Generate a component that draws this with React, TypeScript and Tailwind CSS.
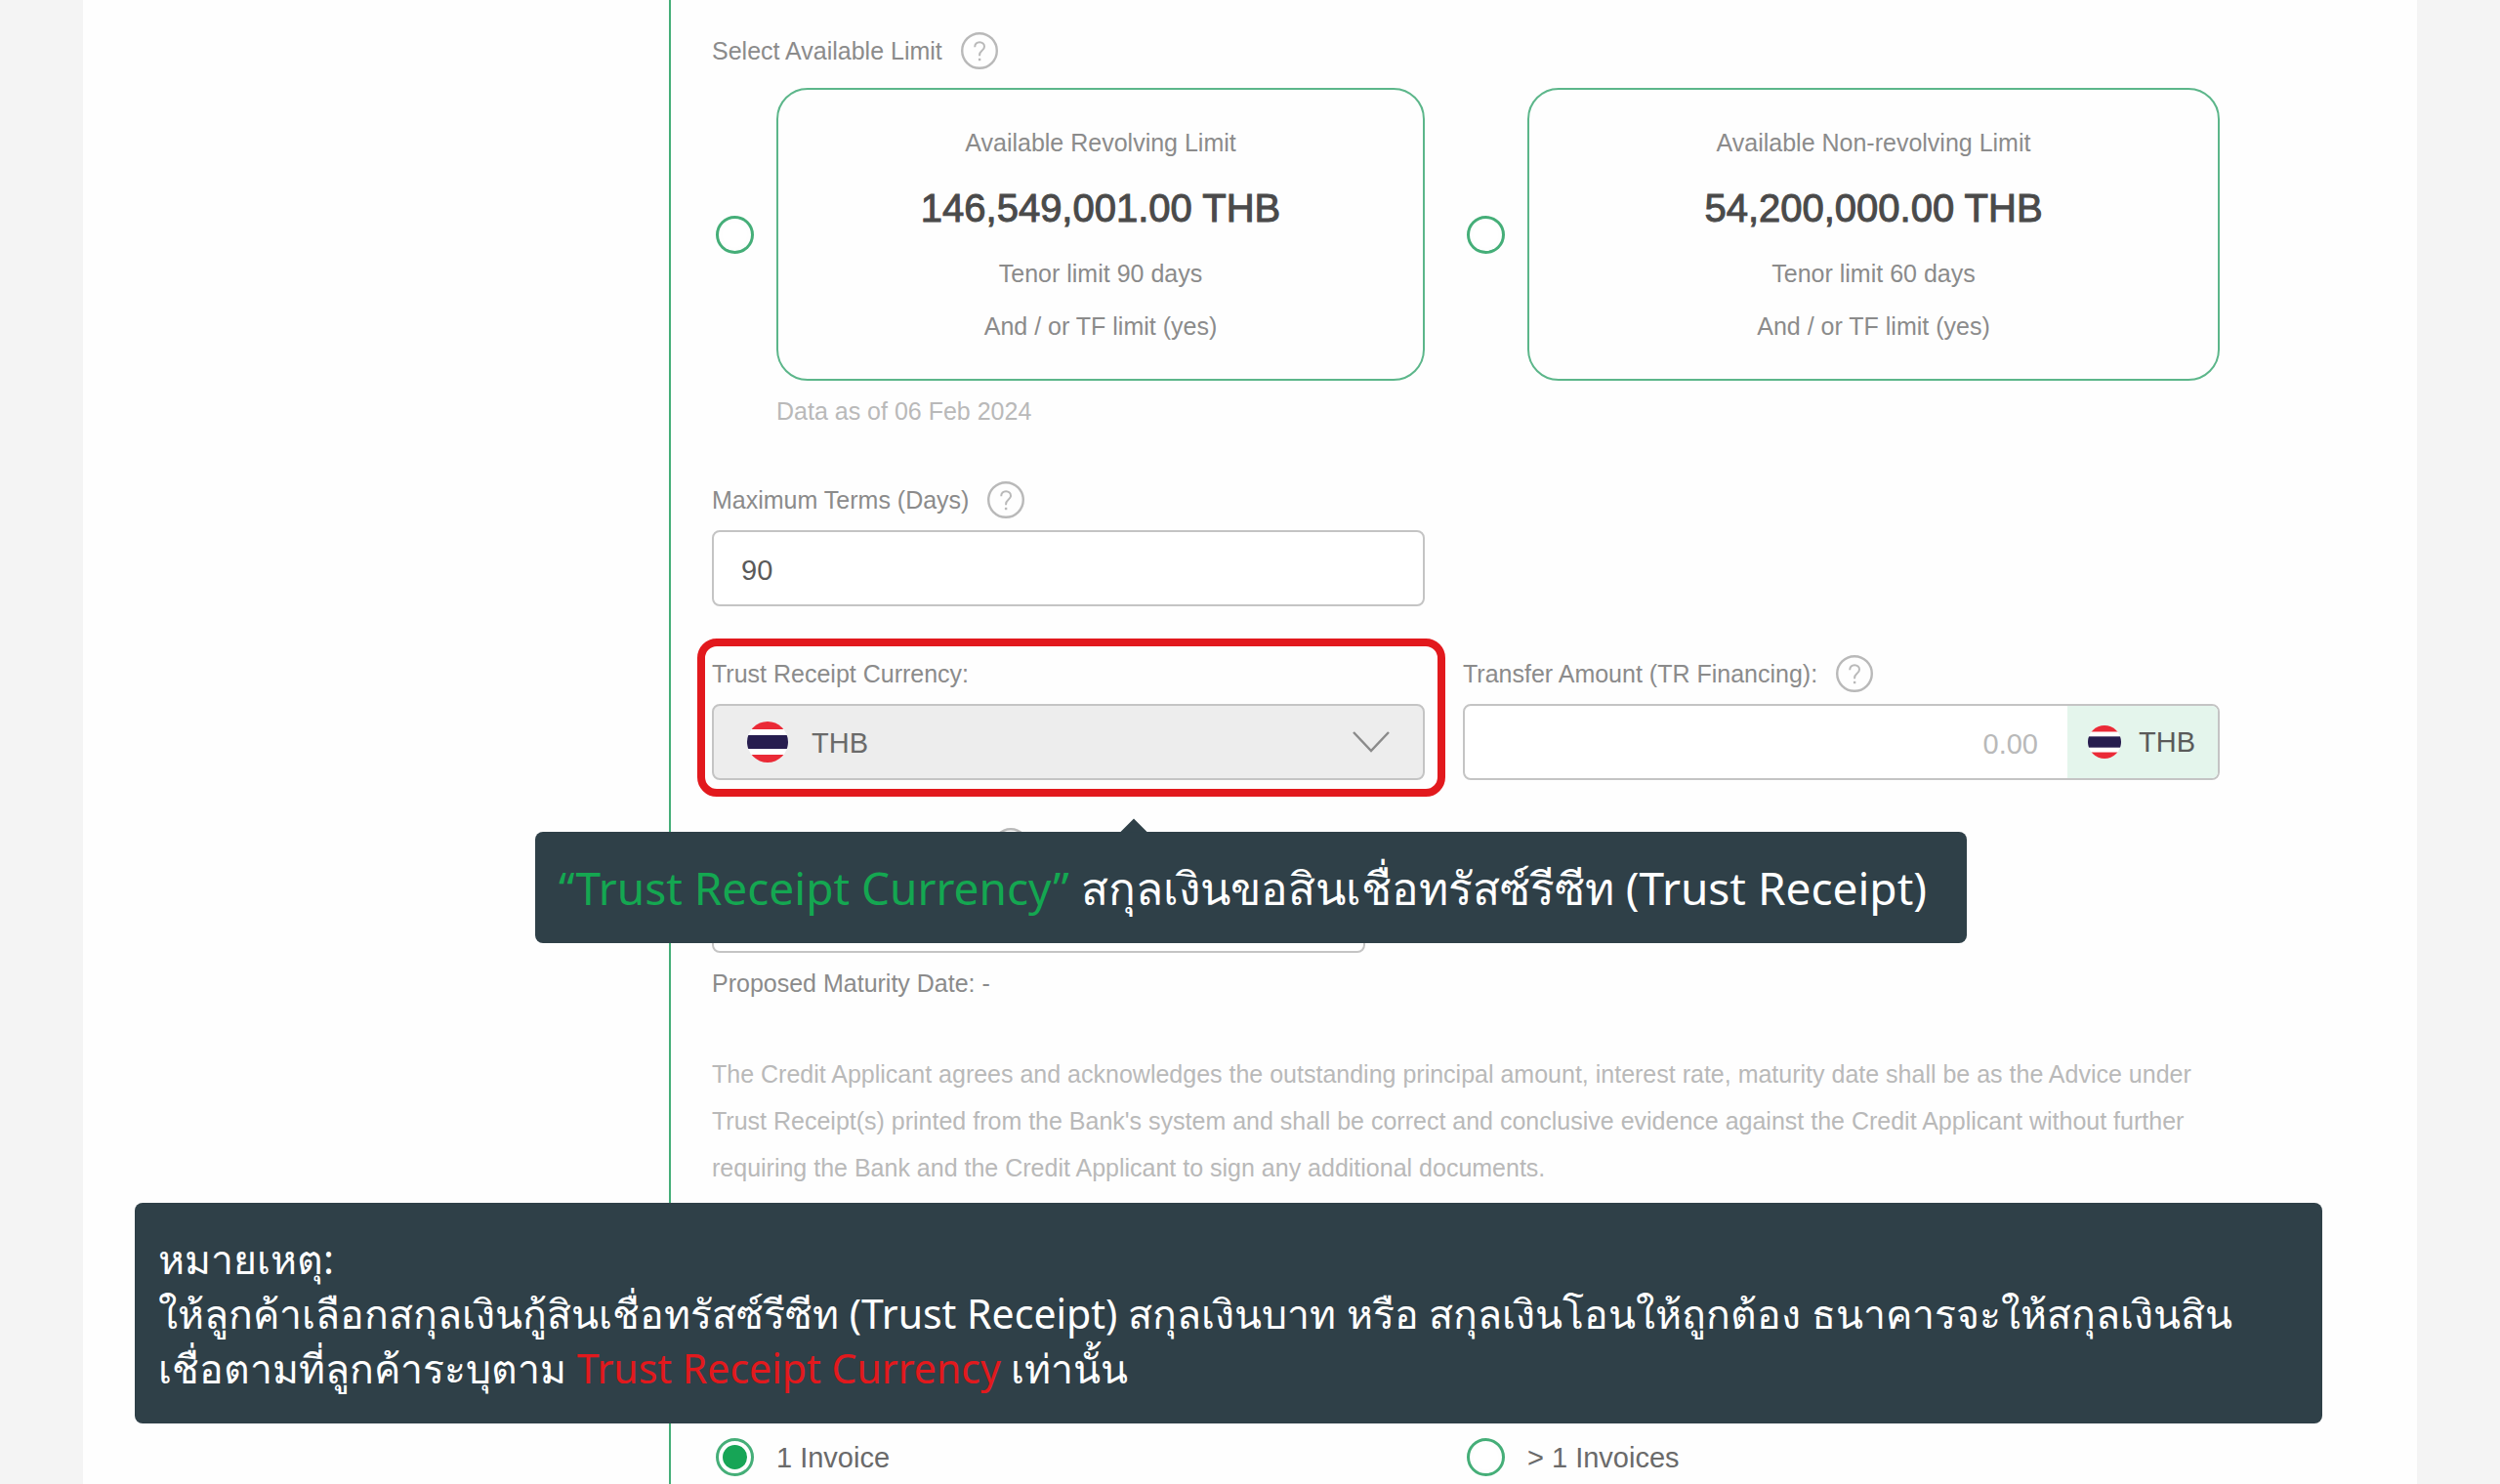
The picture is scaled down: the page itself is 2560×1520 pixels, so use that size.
import { ReactNode } from 'react';

interface LimitOption {
  id: string;
  title: string;
  amount: string;
  tenor: string;
  note: string;
}

const limits: LimitOption[] = [
  {
    id: 'revolving',
    title: 'Available Revolving Limit',
    amount: '146,549,001.00 THB',
    tenor: 'Tenor limit 90 days',
    note: 'And / or TF limit (yes)',
  },
  {
    id: 'non-revolving',
    title: 'Available Non-revolving Limit',
    amount: '54,200,000.00 THB',
    tenor: 'Tenor limit 60 days',
    note: 'And / or TF limit (yes)',
  },
];

const invoices = [
  { id: 'single', label: '1 Invoice' },
  { id: 'multiple', label: '> 1 Invoices' },
];

const radioClass =
  'appearance-none shrink-0 size-[39px] rounded-full border-[3px] border-[#45ae78] bg-white p-[4px] bg-clip-content checked:bg-[#17a556]';

function HelpButton() {
  return (
    <button type="button" aria-label="?" className="block size-[38px] shrink-0">
      <svg viewBox="0 0 38 38" className="size-full" fill="none" stroke="#b9b9b9">
        <circle cx="19" cy="19" r="17.8" strokeWidth="2.4" />
        <path
          d="M14.2 15.2c0-3 2-5 4.9-5s4.9 1.9 4.9 4.5c0 2-1.1 3.1-2.6 4.3-1.6 1.3-2.3 2.2-2.3 4.3v1"
          strokeWidth="2"
        />
        <path d="M19.1 26.8v2.4" strokeWidth="2.4" />
      </svg>
    </button>
  );
}

function ThaiFlag({ className }: { className: string }) {
  return (
    <svg viewBox="0 0 42 42" className={className}>
      <clipPath id="flag-clip">
        <circle cx="21" cy="21" r="21" />
      </clipPath>
      <g clipPath="url(#flag-clip)">
        <rect width="42" height="42" fill="#fff" />
        <rect width="42" height="8" fill="#ea2a37" />
        <rect y="14" width="42" height="14" fill="#271d4f" />
        <rect y="34" width="42" height="8" fill="#ea2a37" />
      </g>
    </svg>
  );
}

function FieldLabel({ htmlFor, help, children }: { htmlFor?: string; help?: boolean; children: ReactNode }) {
  return (
    <div className="flex h-[38px] items-center gap-[19px]">
      <label htmlFor={htmlFor}>{children}</label>
      {help && <HelpButton />}
    </div>
  );
}

export default function App() {
  return (
    <div
      className="relative h-screen overflow-hidden bg-[#f4f4f4] px-[85px] text-[25px] leading-[30px] text-[#8b8b8b]"
      style={{ fontFamily: '"Liberation Sans", Arial, sans-serif' }}
    >
      <main className="flex h-full bg-[#fefefe]">
        <div className="w-[600px] shrink-0" />

        <form className="flex-1 border-l-2 border-[#45ae78] pt-[33px] pr-[202px] pl-[42px]">
          <FieldLabel help>Select Available Limit</FieldLabel>

          <div className="mt-[19px] grid grid-cols-[730fr_775fr] gap-x-[39px]">
            {limits.map((limit) => (
              <div key={limit.id} className="flex items-center gap-[23px] pl-[4px]">
                <input id={limit.id} type="radio" name="limit" className={radioClass} />
                <label
                  htmlFor={limit.id}
                  className="flex h-[300px] flex-1 flex-col justify-center rounded-[32px] border-2 border-[#5cb68a] text-center leading-[54px]"
                >
                  <span>{limit.title}</span>
                  <span className="text-[40px] leading-[80px] text-[#4a4a4a] [-webkit-text-stroke:1px_#4a4a4a]">
                    {limit.amount}
                  </span>
                  <span>{limit.tenor}</span>
                  <span>{limit.note}</span>
                </label>
              </div>
            ))}
          </div>
          <p className="mt-[16px] pl-[66px] text-[#b9b9b9]">Data as of 06 Feb 2024</p>

          <div className="mt-[57px] grid grid-cols-[730fr_775fr] gap-x-[39px] gap-y-[50px]">
            <div className="flex flex-col gap-3">
              <FieldLabel htmlFor="terms" help>Maximum Terms (Days)</FieldLabel>
              <input
                id="terms"
                defaultValue="90"
                className="block h-[78px] w-full rounded-lg border-2 border-[#c4c4c4] bg-white px-[28px] pt-[4px] text-[29px] text-[#5a5a5a]"
              />
            </div>
            <div />

            <div className="relative flex flex-col gap-3">
              <FieldLabel htmlFor="currency">Trust Receipt Currency:</FieldLabel>
              <div className="relative">
                <select
                  id="currency"
                  className="block h-[78px] w-full appearance-none rounded-lg border-2 border-[#c4c4c4] bg-[#ededed] pt-[2px] pl-[100px] text-[29px] text-[#6a6a6a]"
                >
                  <option>THB</option>
                </select>
                <ThaiFlag className="absolute top-[18px] left-[36px] size-[42px]" />
                <svg
                  viewBox="0 0 38 22"
                  className="pointer-events-none absolute top-[28px] right-[36px] h-[22px] w-[38px]"
                  fill="none"
                  stroke="#8b8b8b"
                  strokeWidth="2.4"
                >
                  <path d="M1 1l18 19L37 1" />
                </svg>
              </div>

              {/* highlight ring and its callout */}
              <div className="pointer-events-none absolute -top-[17px] -right-[21px] -bottom-[17px] -left-[15px] rounded-[20px] border-8 border-[#e2191d]" />
              <div className="absolute top-full -left-[181px] z-10 mt-[53px] flex h-[114px] w-[1466px] items-center rounded-lg bg-[#2f4048] pl-[24px] text-[46px] whitespace-nowrap text-white">
                <svg viewBox="0 0 28 14" className="absolute -top-[14px] left-[599px] h-[15px] w-[28px]" fill="#2f4048">
                  <path d="M0 14L14 0l14 14z" />
                </svg>
                <p style={{ fontFamily: '"Noto Sans", sans-serif' }}>
                  <span className="text-[#14a751]">“Trust Receipt Currency”</span> สกุลเงินขอสินเชื่อทรัสซ์รีซีท (Trust Receipt)
                </p>
              </div>
            </div>

            <div className="flex flex-col gap-3">
              <FieldLabel htmlFor="amount" help>Transfer Amount (TR Financing):</FieldLabel>
              <div className="flex h-[78px] overflow-hidden rounded-lg border-2 border-[#c4c4c4] bg-white text-[29px]">
                <input
                  id="amount"
                  placeholder="0.00"
                  className="min-w-0 flex-1 px-[30px] pt-[4px] text-right placeholder:text-[#b9b9b9]"
                />
                <div className="flex w-[154px] items-center gap-[18px] bg-[#e4f5ec] pl-[21px] text-[#5a5a5a]">
                  <ThaiFlag className="size-[34px]" />
                  THB
                </div>
              </div>
            </div>
          </div>

          <div className="mt-[49px] w-[669px]">
            <div className="pl-[287px]">
              <HelpButton />
            </div>
            <input
              aria-label="Terms"
              className="mt-3 block h-[78px] w-full rounded-lg border-2 border-[#c4c4c4] bg-white"
            />
          </div>
          <p className="mt-[16px]">Proposed Maturity Date: -</p>

          <p className="mt-[54px] leading-[48px] text-[#b9b9b9]">
            The Credit Applicant agrees and acknowledges the outstanding principal amount, interest rate, maturity date
            shall be as the Advice under Trust Receipt(s) printed from the Bank's system and shall be correct and
            conclusive evidence against the Credit Applicant without further requiring the Bank and the Credit Applicant
            to sign any additional documents.
          </p>

          <div className="mt-[253px] grid grid-cols-[730fr_775fr] gap-x-[39px] text-[29px] text-[#6a6a6a]">
            {invoices.map((item, i) => (
              <div key={item.id} className="flex items-center gap-[23px] pl-[4px]">
                <input id={item.id} type="radio" name="invoice" defaultChecked={i === 0} className={radioClass} />
                <label htmlFor={item.id}>{item.label}</label>
              </div>
            ))}
          </div>
        </form>
      </main>

      <aside
        className="absolute right-[182px] bottom-[62px] left-[138px] z-20 rounded-lg bg-[#2f4048] px-[24px] py-[29px] text-[41px] leading-[56px] text-white"
        style={{ fontFamily: '"Noto Sans", sans-serif' }}
      >
        <p>หมายเหตุ:</p>
        <p className="whitespace-nowrap">
          ให้ลูกค้าเลือกสกุลเงินกู้สินเชื่อทรัสซ์รีซีท (Trust Receipt) สกุลเงินบาท หรือ สกุลเงินโอนให้ถูกต้อง ธนาคารจะให้สกุลเงินสิน
        </p>
        <p className="whitespace-nowrap">
          เชื่อตามที่ลูกค้าระบุตาม <span className="text-[#e2191d]">Trust Receipt Currency</span> เท่านั้น
        </p>
      </aside>
    </div>
  );
}
